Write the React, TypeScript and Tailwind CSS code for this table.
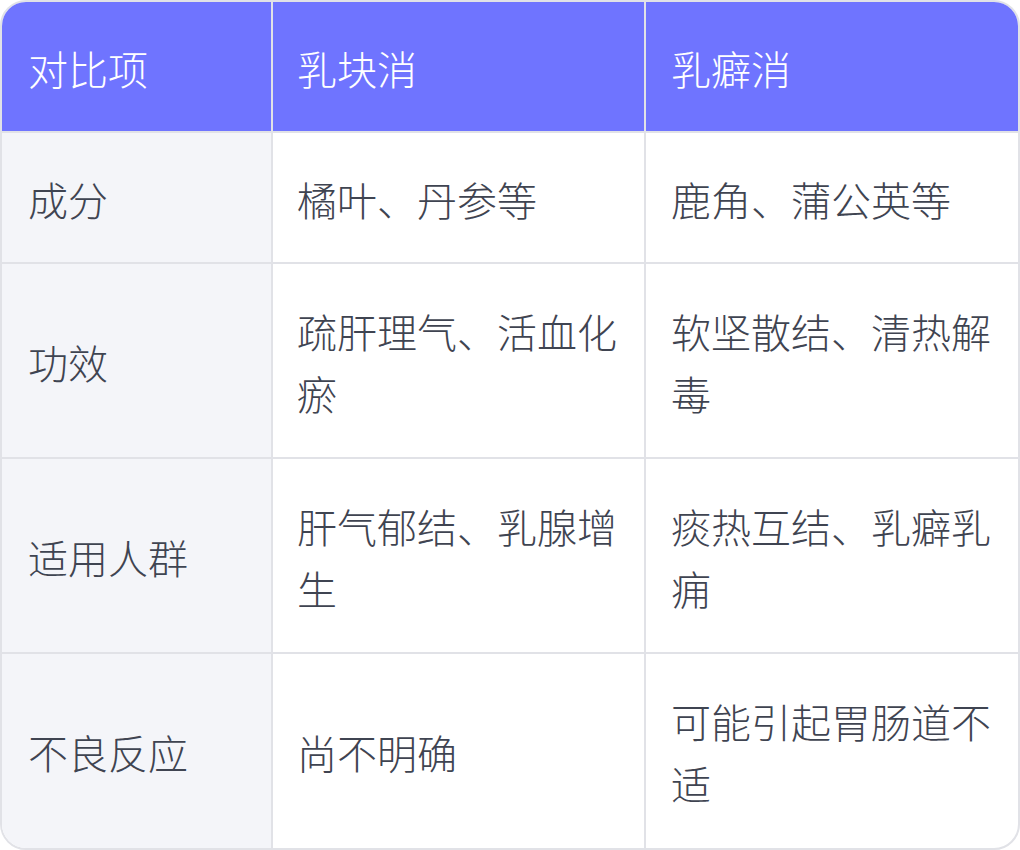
const rows = [
  { label: "成分", a: "橘叶、丹参等", b: "鹿角、蒲公英等", h: "h-[131px]" },
  { label: "功效", a: "疏肝理气、活血化瘀", b: "软坚散结、清热解毒", h: "h-[195px]" },
  { label: "适用人群", a: "肝气郁结、乳腺增生", b: "痰热互结、乳癖乳痈", h: "h-[195px]" },
  { label: "不良反应", a: "尚不明确", b: "可能引起胃肠道不适", h: "h-[195px]" },
]

export default function App() {
  return (
    <div className="w-[1020px] bg-white font-['Noto_Sans_CJK_SC',sans-serif] text-[40px] font-light leading-[62px]">
      <div className="overflow-hidden rounded-[26px] border-2 border-[#e1e2e7]">
        <table className="w-full table-fixed border-collapse">
          <colgroup>
            <col className="w-[270px]" />
            <col className="w-[373px]" />
            <col className="w-[373px]" />
          </colgroup>
          <thead>
            <tr className="h-[130px] bg-[#6f74ff] text-white">
              <th className="px-[26px] pt-[2px] text-left align-middle font-light">对比项</th>
              <th className="border-l-2 border-[#e1e2e7] px-[24px] pt-[2px] text-left align-middle font-light">乳块消</th>
              <th className="border-l-2 border-[#e1e2e7] px-[25px] pt-[2px] text-left align-middle font-light">乳癖消</th>
            </tr>
          </thead>
          <tbody className="text-[#3f4451]">
            {rows.map((row) => (
              <tr key={row.label} className={row.h}>
                <td className="border-t-2 border-[#e1e2e7] bg-[#f4f5f9] px-[26px] pt-[2px] align-middle">{row.label}</td>
                <td className="border-l-2 border-t-2 border-[#e1e2e7] px-[24px] pt-[2px] align-middle">{row.a}</td>
                <td className="border-l-2 border-t-2 border-[#e1e2e7] px-[25px] pt-[2px] align-middle">{row.b}</td>
              </tr>
            ))}
          </tbody>
        </table>
      </div>
    </div>
  )
}
